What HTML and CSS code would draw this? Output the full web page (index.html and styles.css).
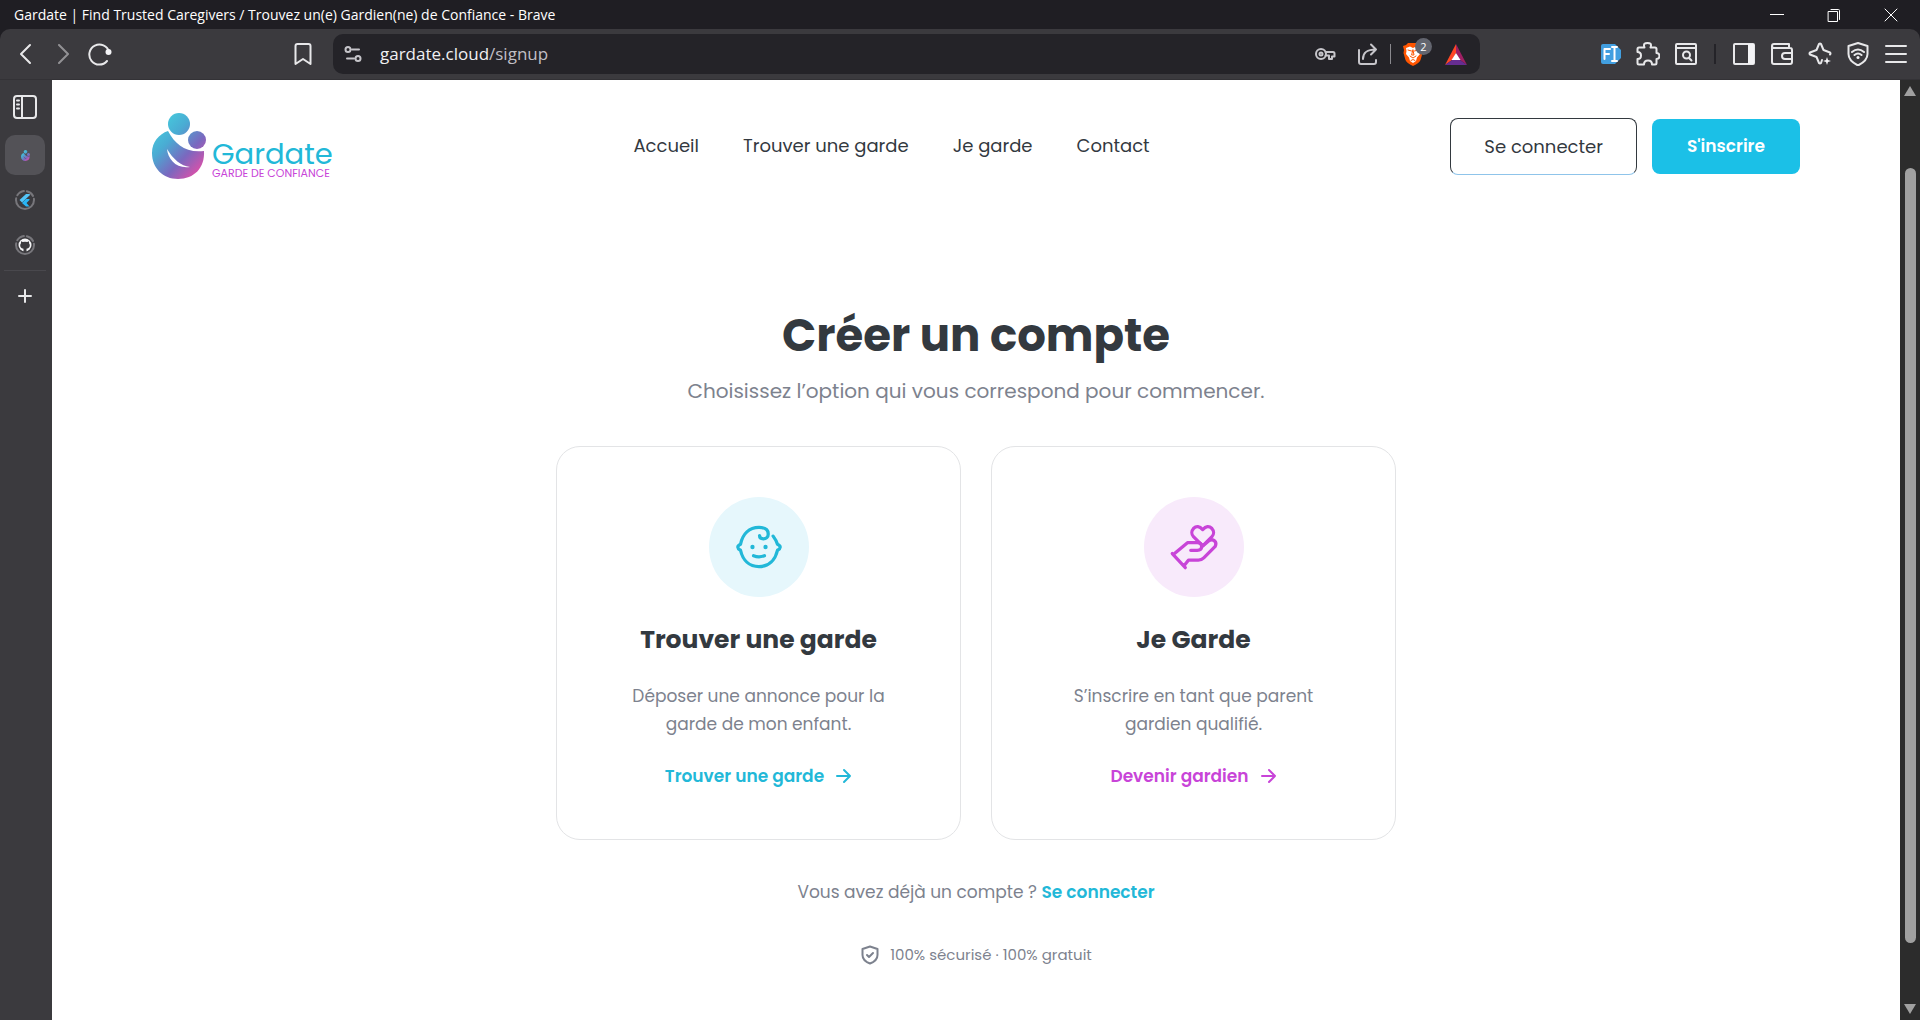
FILE: index.html
```html
<!DOCTYPE html>
<html lang="fr">
<head>
  <meta charset="UTF-8">
  <meta name="viewport" content="width=device-width, initial-scale=1.0">
  <title>Gardate | Find Trusted Caregivers / Trouvez un(e) Gardien(ne) de Confiance</title>
  <link rel="stylesheet" href="styles.css">
</head>
<body>
  <!-- Title bar -->
  <div class="titlebar">
    <span class="window-title">Gardate | Find Trusted Caregivers / Trouvez un(e) Gardien(ne) de Confiance - Brave</span>
    <div class="window-buttons">
      <button type="button" aria-label="Minimize"><svg width="14" height="14" viewBox="0 0 14 14"><path d="M0 6.500h14"/></svg></button>
      <button type="button" aria-label="Restore"><svg width="14" height="14" viewBox="0 0 14 14"><path d="M1.500 3.500h9v10h-9zM4 1.500h7.500a1 1 0 0 1 1 1v9"/></svg></button>
      <button type="button" aria-label="Close"><svg width="14" height="14" viewBox="0 0 14 14"><path d="M1 1l12 12M13 1L1 13"/></svg></button>
    </div>
  </div>

  <!-- Toolbar -->
  <div class="toolbar">
    <div class="nav-buttons">
      <button type="button" aria-label="Back"><svg width="24" height="24" viewBox="0 0 24 24"><path d="M16 3l-9 9 9 9"/></svg></button>
      <button type="button" class="dim" aria-label="Forward"><svg width="24" height="24" viewBox="0 0 24 24"><path d="M8 3l9 9-9 9"/></svg></button>
      <button type="button" aria-label="Reload"><svg width="24" height="24" viewBox="0 0 24 24"><path d="M19 19a10 10 0 1 1 2-9"/><circle cx="20.500" cy="10" r="3" class="solid"/></svg></button>
      <button type="button" class="bookmark" aria-label="Bookmark"><svg width="24" height="24" viewBox="0 0 24 24"><path d="M4.500 22V4a2 2 0 0 1 2-2h11a2 2 0 0 1 2 2v18L12 17z"/></svg></button>
    </div>
    <div class="address">
      <svg class="tune" width="18" height="18" viewBox="0 0 18 18"><circle cx="4" cy="4.500" r="2.500"/><path d="M8 4.500h7M3 13.500h7"/><circle cx="14" cy="13.500" r="2.500"/></svg>
      <p class="url">gardate.cloud<span>/signup</span></p>
      <div class="address-icons">
        <svg width="22" height="22" viewBox="0 0 22 22"><circle cx="7" cy="11" r="5"/><circle cx="7" cy="11" r="1.500"/><path d="M11.500 9H19a1.500 1.500 0 0 1 1.500 1.500v3H18V16h-3v-3.500h-3.500"/></svg>
        <svg width="22" height="22" viewBox="0 0 22 22"><path d="M2 7v12a2 2 0 0 0 2 2h13a2 2 0 0 0 2-2v-2M6 16c0-6 3-9.500 13-9.500M14 1.500l5 5-5 5"/></svg>
        <span class="address-divider"></span>
        <span class="shield">
          <svg width="22" height="26" viewBox="0 0 22 26"><path class="lion" d="M6 2h10l2 2 3 1-1 4 .500 3-2 7q-1 3-7.500 6-6.500-3-7.500-6l-2-7L2 9 1 5l3-1z"/><path class="mane" d="M4 7l4-1.500L11 7l3-1.500L18 7l-.500 3 .500 3-3 3.500-1 3.500-3 2-3-2-1-3.500L4 13l.500-3z"/><path class="face" d="M6 9l3.500 1M16 9l-3.500 1M11 9l1 5h-2zM8 15l3 2 3-2M9 19.500l2-1 2 1"/></svg>
          <span class="badge">2</span>
        </span>
        <svg class="bat" width="22" height="22" viewBox="0 0 22 22"><path fill="#ff4724" d="M11 1L0 22l7-5 4-7z"/><path fill="#9e1f63" d="M11 1l11 21-7-5-4-7z"/><path fill="#662d91" d="M0 22h22l-7-5H7z"/><path fill="#fff" d="M11 10l4.500 7h-9z"/></svg>
      </div>
    </div>
    <div class="extensions">
      <button type="button" aria-label="Text extension"><svg width="22" height="24" viewBox="0 0 22 24"><path class="tag" d="M3 2h12l6 6v8l-6 6H3a2 2 0 0 1-2-2V4a2 2 0 0 1 2-2z"/><path class="tag-mark" d="M4.500 17V7H10M4.500 12H9M12 5h5M14.500 5v14M12 19h5"/></svg></button>
      <button type="button" aria-label="Extensions"><svg width="24" height="24" viewBox="0 0 24 24"><path d="M3 5.500h5.500C7 1.500 9 1 11.500 1s4.500.500 3 4.500H19a1.500 1.500 0 0 1 1.500 1.500v4c1.500 0 3 1 3 3s-1.500 3-3 3v4a1.500 1.500 0 0 1-1.500 1.500h-3c0-2.500-1.500-4-4-4s-4 1.500-4 4H3A1.500 1.500 0 0 1 1.500 21v-4C4 17 5 15.500 5 13.500S4 10 1.500 10V7A1.500 1.500 0 0 1 3 5.500z"/></svg></button>
      <button type="button" aria-label="Search tabs"><svg width="24" height="24" viewBox="0 0 24 24"><rect x="2" y="2" width="20" height="20" rx="1"/><path d="M2 6h20M15 16l2.500 2.500"/><circle cx="12.500" cy="13" r="3.500"/></svg></button>
      <span class="toolbar-divider"></span>
      <button type="button" aria-label="Side panel"><svg width="24" height="24" viewBox="0 0 24 24"><rect x="2" y="2" width="20" height="20" rx="1"/><path class="solid" d="M16 2h6v20h-6z"/></svg></button>
      <button type="button" aria-label="Wallet"><svg width="24" height="24" viewBox="0 0 24 24"><path d="M2 4a2 2 0 0 1 2-2h15v4M2 4v16a2 2 0 0 0 2 2h16a2 2 0 0 0 2-2V8a2 2 0 0 0-2-2H4a2 2 0 0 1-2-2zM22 11h-7a3 3 0 0 0 0 6h7"/></svg></button>
      <button type="button" aria-label="Leo"><svg width="24" height="24" viewBox="0 0 24 24"><path d="M14 18l-1 3q-1 1-2 0l-2.500-6L2 12.500q-1-1 0-2L8.500 8 11 2q1-1 2 0l2.500 6 6.500 2.500q1 1 0 2"/><path class="solid" d="M19 15l1 3 3 1-3 1-1 3-1-3-3-1 3-1z"/></svg></button>
      <button type="button" aria-label="VPN"><svg width="24" height="24" viewBox="0 0 24 24"><path d="M12 1l9.500 3v8c0 6-4.500 9-9.500 11.500C7 21 2.500 18 2.500 12V4zM6 10q6-5 12 0M8.500 13q3.500-3 7 0"/><circle cx="12" cy="15.500" r="1.500" class="solid"/></svg></button>
      <button type="button" aria-label="Menu"><svg width="24" height="24" viewBox="0 0 24 24"><path d="M2 4h20M2 12h20M2 20h20"/></svg></button>
    </div>
  </div>

  <div class="window-body">
    <!-- Vertical tabs -->
    <div class="tabs">
      <button type="button" class="tab" aria-label="Toggle tabs"><svg width="26" height="26" viewBox="0 0 26 26"><rect x="2" y="2" width="22" height="22" rx="3"/><path d="M10 2v22M5 6.500h2M5 10.500h2M5 14.500h2"/></svg></button>
      <button type="button" class="tab active" aria-label="Gardate"><svg width="9" height="11" viewBox="0 0 54 66"><use href="#gardate-mark"/></svg></button>
      <button type="button" class="tab" aria-label="Flutter"><svg width="22" height="22" viewBox="0 0 22 22"><circle class="ring" cx="11" cy="11" r="9"/><path fill="#54c5f8" stroke="none" d="M5.500 11l6.500-6h3.500q1 .500 0 1.500L8 13.500z"/><path fill="#29b6f6" stroke="none" d="M15.500 10H12l-4 4 4 3.500h3.500L12.500 14l3-3z"/></svg></button>
      <button type="button" class="tab" aria-label="GitHub"><svg width="22" height="22" viewBox="0 0 22 22"><circle class="ring" cx="11" cy="11" r="9"/><circle cx="11" cy="11" r="6.500" class="solid"/><path fill="#3b3a3e" stroke="none" d="M9.500 18v-3.200c-2.500-.500-3.300-1.800-3.300-3.600 0-.800.300-1.500.800-2V7.300l1.800.800q2.200-.500 4.400 0l1.800-.800v1.900c.500.500.800 1.200.800 2 0 1.800-.800 3.100-3.300 3.600V18z"/></svg></button>
      <span class="tabs-divider"></span>
      <button type="button" class="tab" aria-label="New tab"><svg width="16" height="16" viewBox="0 0 16 16"><path d="M8 2v12M2 8h12"/></svg></button>
    </div>

    <!-- Page -->
    <div class="page">
      <header class="site-header">
        <a href="#" class="logo">
          <svg width="54" height="66" viewBox="0 0 54 66">
            <defs>
              <linearGradient id="brand" gradientUnits="userSpaceOnUse" x1="4" y1="14" x2="50" y2="58">
                <stop offset="0" stop-color="#46c8dc"/>
                <stop offset=".300" stop-color="#4aabd3"/>
                <stop offset=".650" stop-color="#7a68bf"/>
                <stop offset="1" stop-color="#e04fa8"/>
              </linearGradient>
            </defs>
            <g id="gardate-mark" fill="url(#brand)" stroke="none">
              <circle cx="27" cy="11" r="11"/>
              <circle cx="45" cy="27" r="9"/>
              <path fill-rule="evenodd" d="M16 18C23 31 33 40 52 38 53 55 42 66 26 66 11 66 0 55 0 40 0 29 7 21 16 18zM15 36c1 10 9 20 23 18-9-1-17-8-23-18z"/>
            </g>
          </svg>
          <span class="logo-text">
            <span class="logo-name">Gardate</span>
            <span class="logo-tagline">GARDE DE CONFIANCE</span>
          </span>
        </a>
        <nav class="site-nav">
          <a href="#">Accueil</a>
          <a href="#">Trouver une garde</a>
          <a href="#">Je garde</a>
          <a href="#">Contact</a>
        </nav>
        <div class="actions">
          <button type="button" class="btn btn-outline">Se connecter</button>
          <button type="button" class="btn btn-primary">S'inscrire</button>
        </div>
      </header>

      <main class="signup">
        <h1>Créer un compte</h1>
        <p class="subtitle">Choisissez l’option qui vous correspond pour commencer.</p>

        <div class="cards">
          <section class="card card-find">
            <div class="card-icon">
              <svg width="50" height="50" viewBox="2 2 46 46"><path d="M38 15q3 4 4 7.500 5 2.500 0 5.500C40 37 34 43 25 43S10 37 8 28q-5-3 0-5.500C10 13 16 7 25 7c5 0 8.500 2 8.500 6 0 3-2 4.500-4.500 4.500-2.500 0-3.500-1.500-3.500-3"/><path d="M20 33q5 2 10 0"/><circle class="dot" cx="19" cy="25" r="2"/><circle class="dot" cx="31" cy="25" r="2"/></svg>
            </div>
            <h2>Trouver une garde</h2>
            <p>Déposer une annonce pour la garde de mon enfant.</p>
            <a href="#">Trouver une garde <svg width="16" height="16" viewBox="0 0 16 16"><path d="M1 8h13M8 2l6 6-6 6"/></svg></a>
          </section>
          <section class="card card-give">
            <div class="card-icon">
              <svg width="50" height="50" viewBox="2 2 46 46"><path d="M33 24L24.500 15.500a5.500 5.500 0 0 1 0-7.500q4-4 8.500 1 4.500-5 8.500-1a5.500 5.500 0 0 1 0 7.500z"/><path d="M5 31l12 13M6 32L19 21h9q4 0 4 3.500T28 28h-6M33 24l6-5q3-1.500 5 .500t.500 5L34 35q-2 2-5 2h-9l-4 5"/></svg>
            </div>
            <h2>Je Garde</h2>
            <p>S’inscrire en tant que parent gardien qualifié.</p>
            <a href="#">Devenir gardien <svg width="16" height="16" viewBox="0 0 16 16"><path d="M1 8h13M8 2l6 6-6 6"/></svg></a>
          </section>
        </div>

        <p class="login">Vous avez déjà un compte ? <a href="#">Se connecter</a></p>
        <p class="secure">
          <svg width="20" height="20" viewBox="0 0 20 20"><path d="M10 1.500l7.500 2.500v6c0 4.500-3.500 7-7.500 8.500C6 17 2.500 14.500 2.500 10V4zM7 10l2 2 4-4"/></svg>
          100% sécurisé · 100% gratuit
        </p>
      </main>
    </div>

    <div class="scrollbar">
      <svg width="12" height="12" viewBox="0 0 12 12"><path d="M6 1l6 10H0z"/></svg>
      <span class="thumb"></span>
      <svg width="12" height="12" viewBox="0 0 12 12"><path d="M6 11L0 1h12z"/></svg>
    </div>
  </div>
</body>
</html>
```
FILE: styles.css
```css
* {
  box-sizing: border-box;
}

body {
  margin: 0;
  min-height: 100vh;
  display: flex;
  flex-direction: column;
  background: #1f1e23;
  font-family: 'Poppins', 'Inter', sans-serif;
  color: #33393f;
}

h1, h2, p {
  margin: 0;
}

a {
  text-decoration: none;
}

button {
  font-family: inherit;
  padding: 0;
  border: none;
  background: none;
  cursor: pointer;
}

svg {
  display: block;
  flex-shrink: 0;
  fill: none;
  stroke-linecap: round;
  stroke-linejoin: round;
}

/* Browser window */
.titlebar {
  display: flex;
  align-items: center;
  justify-content: space-between;
  height: 29px;
  padding: 0 22px 0 14px;
  font-family: 'Open Sans', sans-serif;
  font-size: 14px;
  color: #fff;
}

.window-buttons {
  display: flex;
  gap: 43px;
}

.window-buttons svg {
  stroke: #fff;
  stroke-width: 1;
}

.toolbar {
  display: grid;
  grid-template-columns: 319px 1fr 428px;
  align-items: center;
  height: 51px;
  padding: 0 12px 0 14px;
  background: #3b3a3e;
  border-bottom: 1px solid #333236;
  border-radius: 10px 10px 0 0;
}

.toolbar svg,
.tabs svg {
  stroke: #e8e8ea;
  stroke-width: 2;
}

.toolbar .solid,
.tabs .solid {
  fill: #f4f4f6;
  stroke: none;
}

.nav-buttons {
  display: flex;
  gap: 13px;
  padding-right: 18px;
}

.dim {
  opacity: 0.5;
}

.bookmark {
  margin-left: auto;
}

.address {
  display: flex;
  align-items: center;
  height: 40px;
  padding: 0 13px 0 11px;
  background: #242328;
  border-radius: 10px;
}

.address svg {
  stroke: #c6c5ca;
}

.url {
  flex: 1;
  margin-left: 18px;
  font-family: 'Open Sans', sans-serif;
  font-size: 17px;
  line-height: 22px;
  color: #f0f0f2;
}

.url span {
  color: #c0bfc5;
}

.address-icons {
  display: flex;
  align-items: center;
  gap: 21px;
}

.address-divider {
  width: 1px;
  height: 20px;
  margin: 0 -10px;
  background: #8a898e;
}

.shield {
  position: relative;
}

.address .lion {
  fill: #ff5500;
  stroke: none;
}

.address .mane {
  fill: #fff;
  stroke: none;
}

.address .face {
  stroke: #ff5500;
  stroke-width: 1;
}

.address .bat {
  stroke: none;
}

.badge {
  position: absolute;
  top: -3px;
  right: -8px;
  width: 17px;
  height: 17px;
  border-radius: 50%;
  background: #63656f;
  color: #fff;
  font-family: 'Open Sans', sans-serif;
  font-size: 11px;
  line-height: 17px;
  text-align: center;
}

.extensions {
  display: flex;
  align-items: center;
  justify-content: flex-end;
  gap: 14px;
}

.extensions .tag {
  fill: #429fe0;
  stroke: none;
}

.extensions .tag-mark {
  stroke: #fff;
}

.toolbar-divider {
  width: 2px;
  height: 20px;
  margin: 0 2px;
  background: #242328;
}

.window-body {
  flex: 1;
  display: flex;
}

.tabs {
  width: 52px;
  padding: 3px 6px 0 4px;
  background: #3b3a3e;
  display: flex;
  flex-direction: column;
  align-items: center;
  gap: 5px;
}

.tab {
  display: flex;
  align-items: center;
  justify-content: center;
  width: 40px;
  height: 40px;
  border-radius: 10px;
}

.tab:first-child {
  height: 47px;
}

.tab.active {
  background: #535257;
}

.tabs .ring {
  stroke: #77767b;
  stroke-dasharray: 30 3 8 3 8 3;
}

.tabs-divider {
  width: 100%;
  height: 1px;
  background: #49484d;
}

.scrollbar {
  width: 20px;
  padding: 5px 0;
  background: #2c2c2c;
  display: flex;
  flex-direction: column;
  align-items: center;
}

.scrollbar svg {
  fill: #a0a0a0;
}

.thumb {
  flex: 1;
  width: 11px;
  margin: 71px 0 60px;
  border-radius: 6px;
  background: #a0a0a0;
}

/* Page */
.page {
  flex: 1;
  background: #fff;
}

.site-header {
  display: flex;
  align-items: center;
  justify-content: space-between;
  padding: 33px 100px;
}

.logo {
  display: flex;
  align-items: flex-end;
  gap: 6px;
}

.logo-text {
  display: flex;
  flex-direction: column;
}

.logo-name {
  font-size: 29px;
  line-height: 28px;
  color: #22b8d8;
}

.logo-tagline {
  font-size: 11px;
  line-height: 11px;
  color: #c844d8;
}

.site-nav {
  display: flex;
  gap: 44px;
}

.site-nav a {
  font-size: 18px;
  line-height: 28px;
  color: #33393f;
}

.actions {
  display: flex;
  align-items: center;
  justify-content: flex-end;
  gap: 15px;
}

.btn {
  padding: 0 35px;
  height: 55px;
  border-radius: 8px;
}

.btn-outline {
  padding: 0 33px;
  height: 57px;
  border: 1px solid #33393f;
  border-bottom-color: #8fc4ea;
  font-size: 18px;
  color: #33393f;
  background: #fff;
}

.btn-primary {
  background: #1bc0e7;
  color: #fff;
  font-size: 17px;
  font-weight: 600;
}

.signup {
  max-width: 840px;
  margin: 0 auto;
  padding: 94px 0 40px;
  text-align: center;
}

.signup h1 {
  font-size: 45px;
  line-height: 60px;
  font-weight: 700;
}

.subtitle {
  margin: 10px 0 40px;
  font-size: 20px;
  line-height: 30px;
  color: #7d828e;
}

.cards {
  display: grid;
  grid-template-columns: 1fr 1fr;
  gap: 30px;
}

.card {
  display: flex;
  flex-direction: column;
  align-items: center;
  padding: 50px 60px 49px;
  border: 1px solid #e3e4e6;
  border-radius: 24px;
}

.card-icon {
  display: flex;
  align-items: center;
  justify-content: center;
  width: 100px;
  height: 100px;
  border-radius: 50%;
}

.card-icon svg {
  stroke-width: 3;
}

.card-find .card-icon {
  background: #e6f7fc;
}

.card-give .card-icon {
  background: #f8eafb;
}

.card-find svg {
  stroke: #22b8d8;
}

.card-give svg {
  stroke: #c844d8;
}

.card-find .dot {
  fill: #22b8d8;
  stroke: none;
}

.card h2 {
  margin: 25px 0 24px;
  font-size: 25px;
  line-height: 36px;
  font-weight: 700;
}

.card p {
  font-size: 17px;
  line-height: 28px;
  color: #7d828e;
}

.card a {
  display: flex;
  align-items: center;
  gap: 12px;
  margin-top: 24px;
  font-size: 17px;
  line-height: 28px;
  font-weight: 600;
}

.card a svg {
  stroke-width: 2;
}

.card-find a,
.login a {
  color: #22b8d8;
}

.card-give a {
  color: #c844d8;
}

.login {
  margin-top: 38px;
  font-size: 17px;
  line-height: 28px;
  color: #7d828e;
}

.login a {
  font-weight: 600;
}

.secure {
  display: flex;
  align-items: center;
  justify-content: center;
  gap: 10px;
  margin-top: 37px;
  font-size: 15px;
  line-height: 24px;
  color: #7d828e;
}

.secure svg {
  stroke: #7d828e;
  stroke-width: 2;
}
```
